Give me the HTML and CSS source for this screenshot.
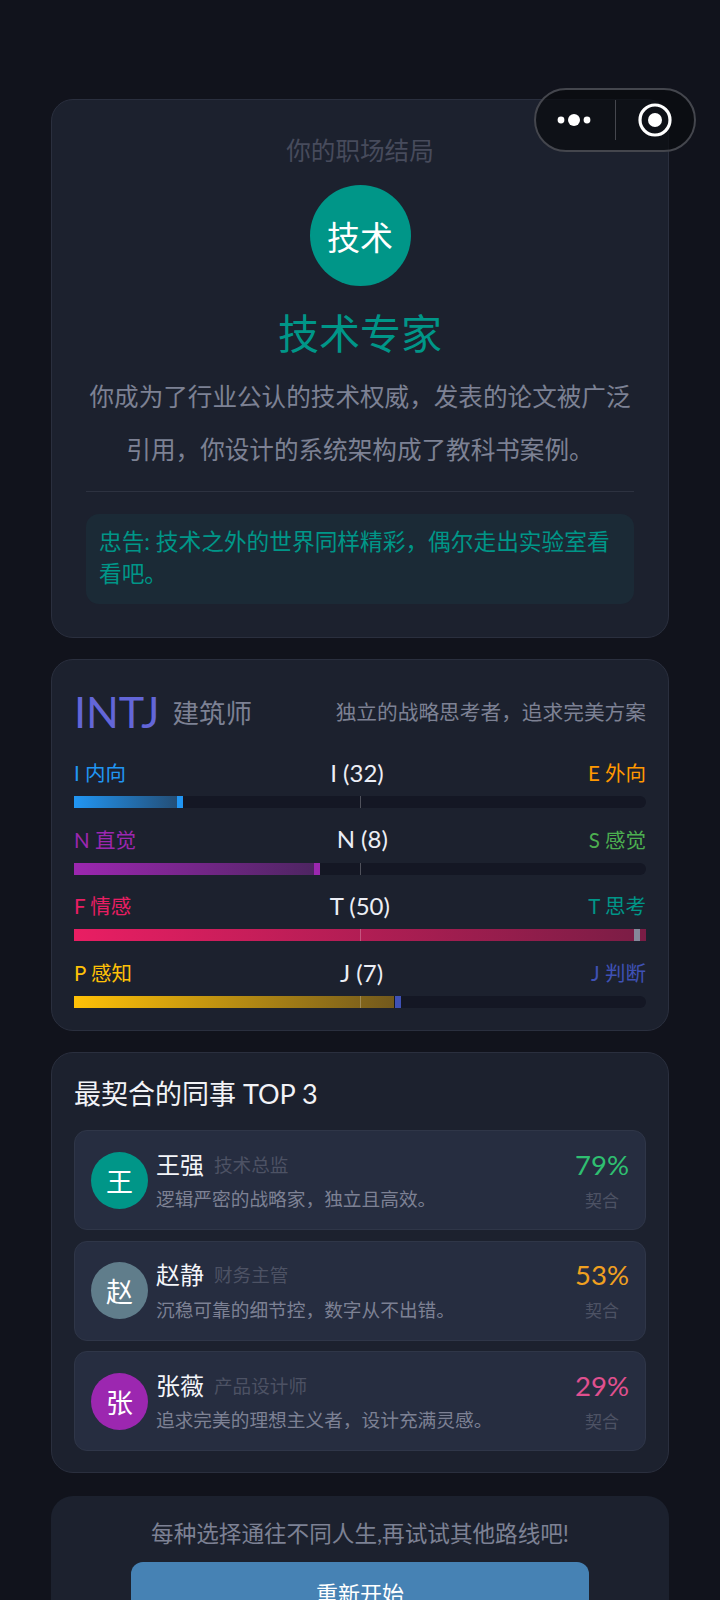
FILE: index.html
```html
<!DOCTYPE html>
<html lang="zh">
<head>
<meta charset="utf-8">
<title>职场结局</title>
<link rel="stylesheet" href="styles.css">
</head>
<body>
<div class="capsule">
  <svg class="cap-dots" width="40" height="16" viewBox="0 0 40 16"><circle cx="7" cy="8" r="3.4"/><circle cx="20" cy="8" r="6"/><circle cx="33" cy="8" r="3.4"/></svg>
  <span class="cap-line"></span>
  <svg class="cap-target" width="36" height="36" viewBox="0 0 36 36"><circle cx="18" cy="18" r="15" class="ring"/><circle cx="18" cy="18" r="7" class="core"/></svg>
</div>
<main class="page">
  <section class="card ending">
    <p class="ending-label">你的职场结局</p>
    <div class="ending-badge">技术</div>
    <h1 class="ending-title">技术专家</h1>
    <p class="ending-desc">你成为了行业公认的技术权威，发表的论文被广泛引用，你设计的系统架构成了教科书案例。</p>
    <div class="divider"></div>
    <p class="advice">忠告: 技术之外的世界同样精彩，偶尔走出实验室看看吧。</p>
  </section>

  <section class="card mbti">
    <header class="mbti-head">
      <span class="mbti-type">INTJ</span>
      <span class="mbti-name">建筑师</span>
      <span class="mbti-desc">独立的战略思考者，追求完美方案</span>
    </header>
    <div class="dim">
      <div class="dim-labels"><span class="c-blue">I 内向</span><span class="dim-value">I (32)</span><span class="c-orange">E 外向</span></div>
      <div class="track"><div class="fill f-blue" style="width:19%"></div><i class="tick"></i><i class="mark m-blue" style="left:18%"></i></div>
    </div>
    <div class="dim">
      <div class="dim-labels"><span class="c-purple">N 直觉</span><span class="dim-value">N (8)</span><span class="c-green">S 感觉</span></div>
      <div class="track"><div class="fill f-purple" style="width:43%"></div><i class="tick"></i><i class="mark m-purple" style="left:42%"></i></div>
    </div>
    <div class="dim">
      <div class="dim-labels"><span class="c-red">F 情感</span><span class="dim-value">T (50)</span><span class="c-teal">T 思考</span></div>
      <div class="track"><div class="fill f-red" style="width:100%"></div><i class="tick"></i><i class="mark m-grey" style="left:97.9%"></i></div>
    </div>
    <div class="dim">
      <div class="dim-labels"><span class="c-yellow">P 感知</span><span class="dim-value">J (7)</span><span class="c-indigo">J 判断</span></div>
      <div class="track"><div class="fill f-yellow" style="width:56%"></div><i class="tick"></i><i class="mark m-indigo" style="left:56.1%"></i></div>
    </div>
  </section>

  <section class="card peers">
    <h2 class="peers-title">最契合的同事 TOP 3</h2>
    <div class="peer">
      <div class="avatar a-teal">王</div>
      <div class="peer-body">
        <div class="peer-head"><span class="peer-name">王强</span><span class="peer-role">技术总监</span></div>
        <p class="peer-desc">逻辑严密的战略家，独立且高效。</p>
      </div>
      <div class="peer-score"><span class="pct p-green">79%</span><span class="pct-label">契合</span></div>
    </div>
    <div class="peer">
      <div class="avatar a-grey">赵</div>
      <div class="peer-body">
        <div class="peer-head"><span class="peer-name">赵静</span><span class="peer-role">财务主管</span></div>
        <p class="peer-desc">沉稳可靠的细节控，数字从不出错。</p>
      </div>
      <div class="peer-score"><span class="pct p-orange">53%</span><span class="pct-label">契合</span></div>
    </div>
    <div class="peer">
      <div class="avatar a-purple">张</div>
      <div class="peer-body">
        <div class="peer-head"><span class="peer-name">张薇</span><span class="peer-role">产品设计师</span></div>
        <p class="peer-desc">追求完美的理想主义者，设计充满灵感。</p>
      </div>
      <div class="peer-score"><span class="pct p-pink">29%</span><span class="pct-label">契合</span></div>
    </div>
  </section>

  <section class="card retry">
    <p class="retry-text">每种选择通往不同人生,再试试其他路线吧!</p>
    <button class="retry-btn">重新开始</button>
  </section>
</main>
</body>
</html>
```
FILE: styles.css
```css
* { box-sizing: border-box; }
html, body { margin: 0; padding: 0; }
body {
  width: 720px;
  background: #11131c;
  font-family: Lato, "Noto Sans CJK SC", sans-serif;
  color: #fff;
  position: relative;
}
p, h1, h2 { margin: 0; font-weight: 400; }

.capsule {
  position: absolute;
  left: 534px;
  top: 88px;
  width: 162px;
  height: 64px;
  border: 2px solid #44464d;
  border-radius: 32px;
  background: rgba(10, 11, 15, 0.72);
  display: flex;
  align-items: center;
  z-index: 5;
}
.cap-dots { margin-left: 18px; fill: #fff; }
.cap-line { width: 1px; height: 40px; background: #45474e; margin-left: 21px; margin-right: 21px; }
.cap-target .ring { fill: none; stroke: #fff; stroke-width: 3.2; }
.cap-target .core { fill: #fff; }

.page {
  padding: 99px 51px 0;
  display: flex;
  flex-direction: column;
  gap: 21px;
}
.card {
  background: #1c212e;
  border: 1.5px solid #2a2f3e;
  border-radius: 22px;
}

.ending {
  height: 539px;
  padding: 0 34px;
  display: flex;
  flex-direction: column;
  align-items: center;
}
.ending-label { margin-top: 33px; font-size: 24.6px; line-height: 36px; color: #474b5c; }
.ending-badge {
  margin-top: 16px;
  width: 101px;
  height: 101px;
  border-radius: 50%;
  background: #009688;
  font-size: 33px;
  display: flex;
  align-items: center;
  justify-content: center;
}
.ending-title { margin-top: 20px; font-size: 41px; line-height: 56px; color: #009688; }
.ending-desc { margin-top: 8px; font-size: 24.6px; line-height: 53px; color: #7d8194; text-align: center; }
.divider { align-self: stretch; height: 1px; background: #2d3240; margin-top: 15px; }
.advice {
  align-self: stretch;
  margin-top: 22px;
  padding: 12px 13px 15px;
  border-radius: 13px;
  background: #1b2a36;
  color: #009688;
  font-size: 22.7px;
  line-height: 31.5px;
}

.mbti { height: 372px; padding: 21px 22px 0; }
.mbti-head { display: flex; align-items: center; height: 60px; margin-bottom: 11px; }
.mbti-type { font-size: 43px; font-weight: 400; color: #6366d8; }
.mbti-name { margin-left: 13px; font-size: 26.5px; color: #7d8194; }
.mbti-desc { margin-left: auto; font-size: 20.7px; color: #7d8194; }

.dim { height: 66.7px; }
.dim-labels {
  display: flex;
  justify-content: space-between;
  align-items: center;
  height: 40px;
  font-size: 20.5px;
}
.dim-value { font-size: 24px; color: #eceef5; }
.track { position: relative; height: 12px; margin-top: 4px; background: #141724; border-radius: 0 6px 6px 0; }
.fill { height: 100%; }
.tick { position: absolute; left: 50%; top: 0; bottom: 0; width: 1px; background: rgba(255,255,255,0.25); }
.mark { position: absolute; top: 0; bottom: 0; width: 6px; }

.c-blue { color: #2196f3; }
.c-orange { color: #ff9800; }
.c-purple { color: #9c27b0; }
.c-green { color: #4caf50; }
.c-red { color: #e91e63; }
.c-teal { color: #009688; }
.c-yellow { color: #ffc107; }
.c-indigo { color: #3f51b5; }

.f-blue { background: linear-gradient(90deg, #2196f3, #244a6f); }
.f-purple { background: linear-gradient(90deg, #9c27b0, #4c2560); }
.f-red { background: linear-gradient(90deg, #e91e63, #7a1d45); }
.f-yellow { background: linear-gradient(90deg, #ffc107, #72591d); }
.m-blue { background: #2196f3; }
.m-purple { background: #9c27b0; }
.m-grey { background: #85889a; }
.m-indigo { background: #3f51b5; }

.peers { height: 421px; padding: 0 22px; display: flex; flex-direction: column; gap: 10.5px; }
.peers-title { font-size: 27px; line-height: 40px; margin: 21px 0 5.5px; color: #f2f3f7; }
.peer {
  height: 100px;
  flex: none;
  background: #262d40;
  border: 1.5px solid #2f3648;
  border-radius: 13px;
  padding: 0 16px;
  display: flex;
  align-items: center;
}
.avatar {
  width: 57px;
  height: 57px;
  border-radius: 50%;
  flex: none;
  display: flex;
  align-items: center;
  justify-content: center;
  font-size: 27px;
}
.a-teal { background: #009688; }
.a-grey { background: #607d8b; }
.a-purple { background: #9c27b0; }
.peer-body { margin: 0 0 4px 8px; flex: 1; }
.peer-head { display: flex; align-items: center; height: 42px; }
.peer-name { font-size: 24px; color: #f4f5f9; }
.peer-role { margin-left: 10px; font-size: 18.6px; color: #4d5264; }
.peer-desc { font-size: 18.7px; line-height: 30px; color: #7d8194; }
.peer-score { display: flex; flex-direction: column; align-items: center; }
.pct { font-size: 27.5px; font-weight: 400; line-height: 38px; }
.pct-label { margin-top: 3px; font-size: 17px; line-height: 28px; color: #4d5264; }
.p-green { color: #2fbf71; }
.p-orange { color: #f0a020; }
.p-pink { color: #e0508f; }

.retry {
  height: 130px;
  margin-top: 2px;
  border: none;
  display: flex;
  flex-direction: column;
  align-items: center;
}
.retry-text { margin-top: 21px; font-size: 22.6px; line-height: 34px; color: #7d8194; }
.retry-btn {
  margin-top: 11px;
  width: 458px;
  height: 60px;
  flex: none;
  border: none;
  border-radius: 12px;
  background: #4682b4;
  color: #fff;
  font-family: inherit;
  font-size: 22px;
}
```
